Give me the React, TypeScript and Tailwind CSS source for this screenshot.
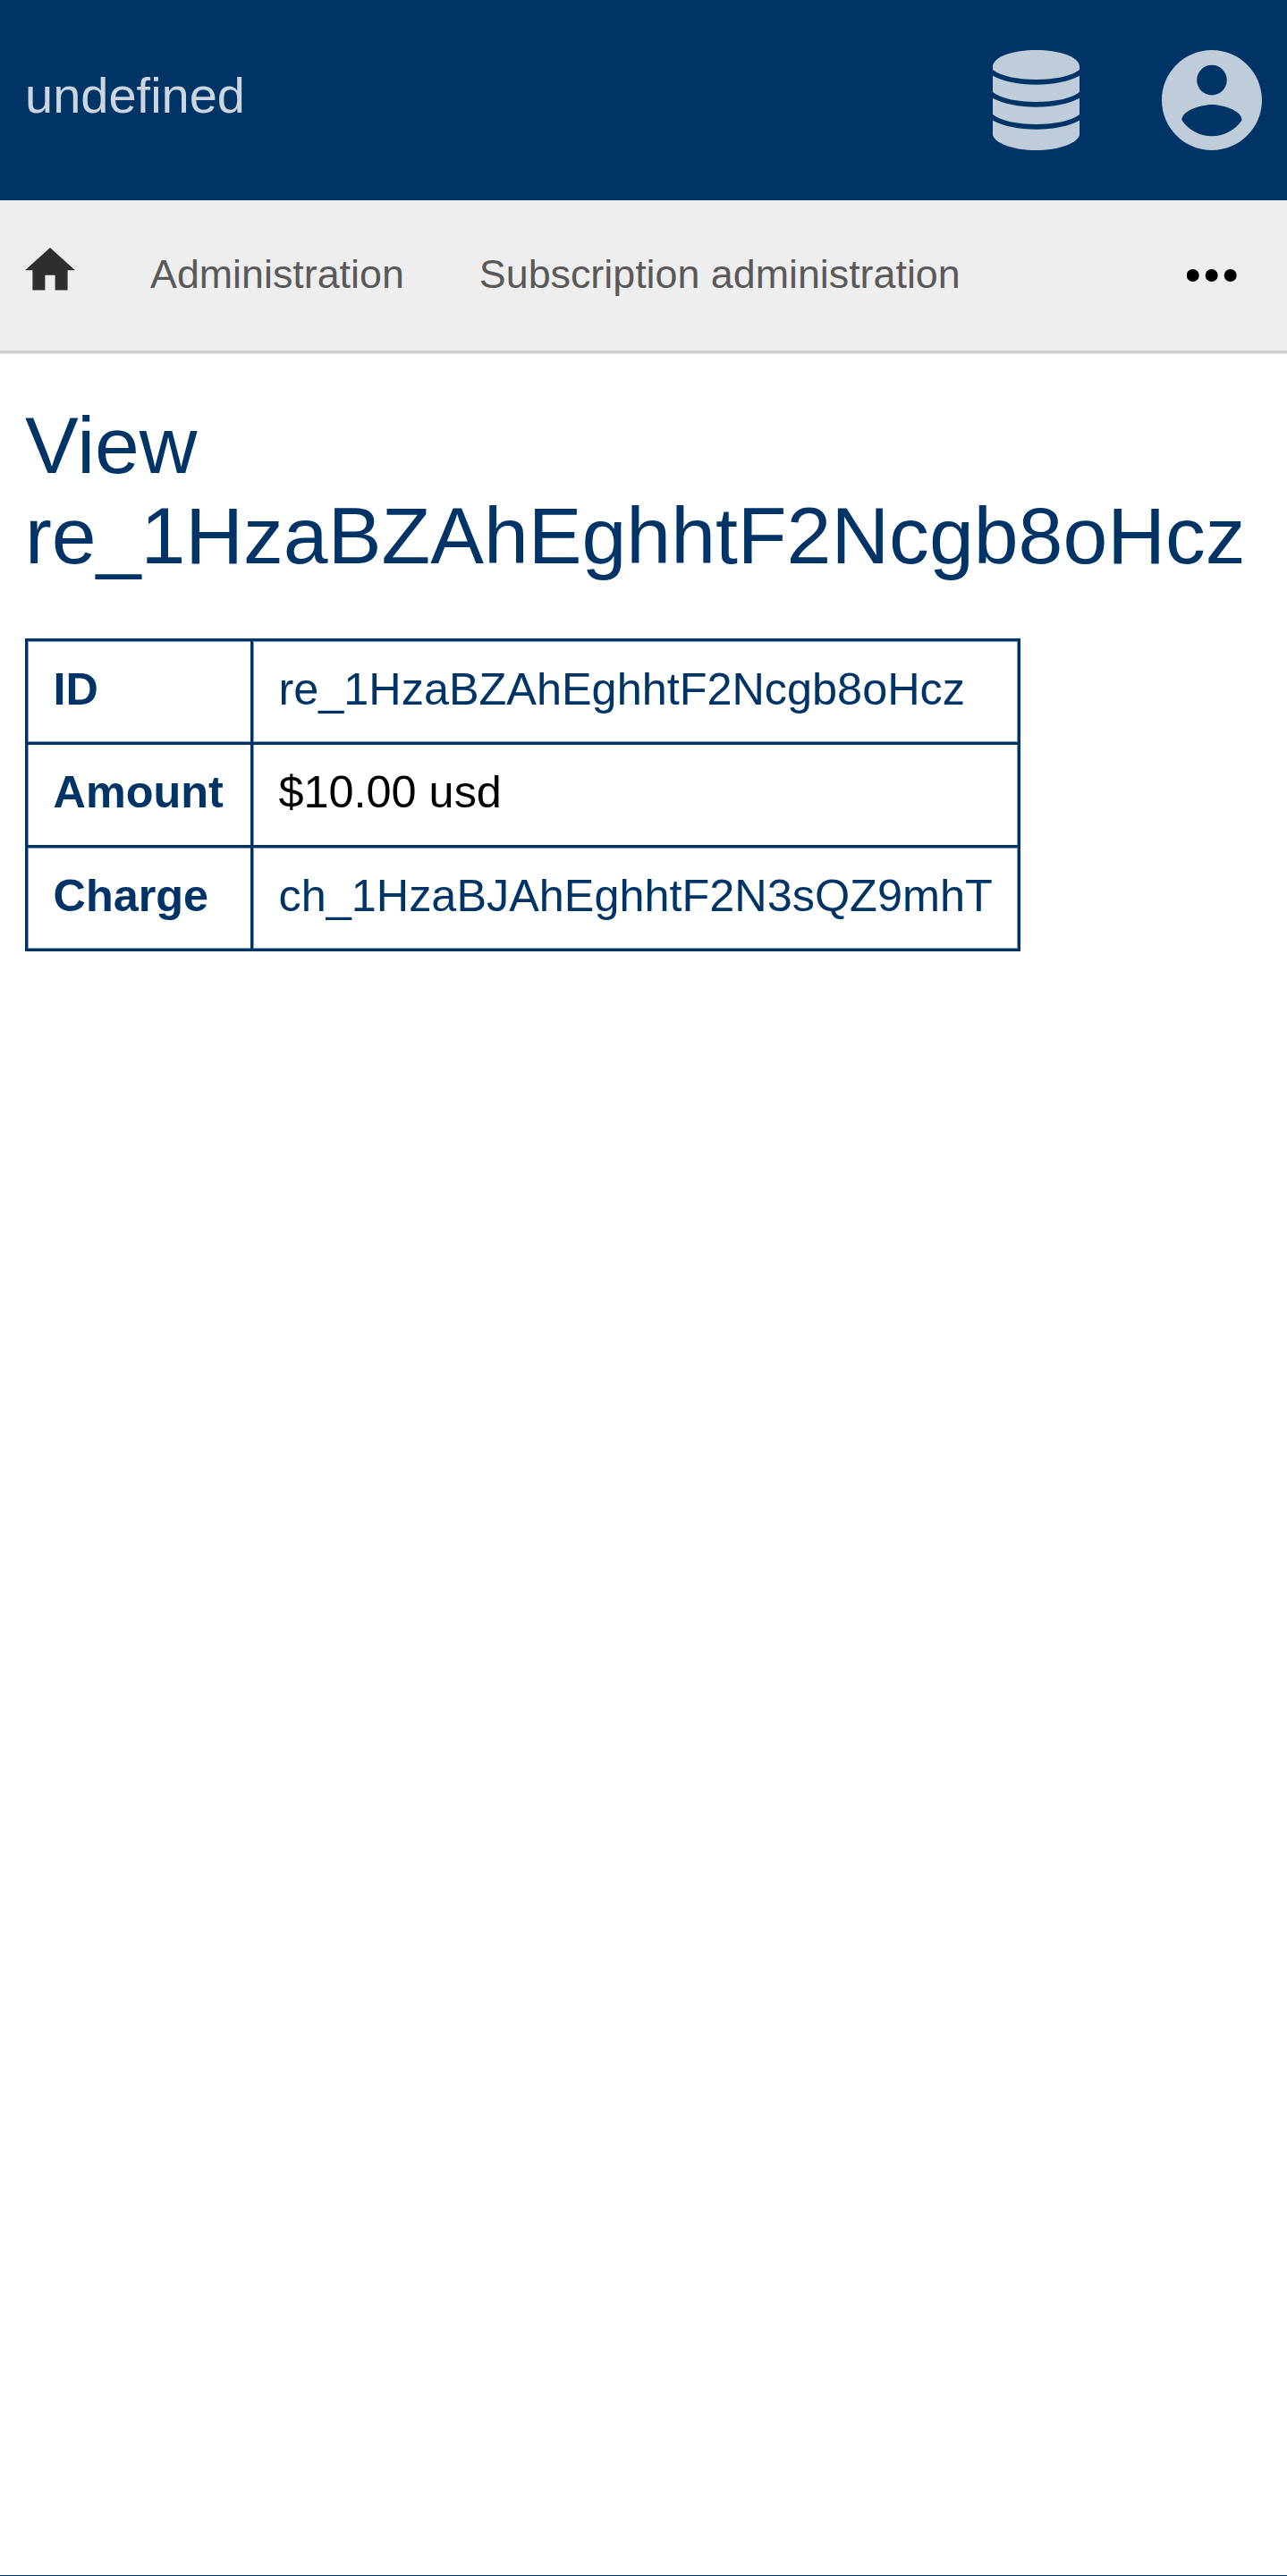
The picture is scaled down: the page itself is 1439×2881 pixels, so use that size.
const rows = [
  {
    label: 'ID',
    value: 're_1HzaBZAhEghhtF2Ncgb8oHcz',
    color: 'text-[#003366]',
    height: 'h-[116px]',
    offset: 'pt-[25px]',
    th: 'shadow-[inset_1px_1px_0_#7f99b2,inset_0_-1px_0_#7f99b2]',
    td: 'shadow-[inset_1px_1px_0_#7f99b2,inset_-1px_-1px_0_#7f99b2]',
  },
  {
    label: 'Amount',
    value: '$10.00 usd',
    color: 'text-black',
    height: 'h-[115px]',
    offset: 'pt-[24px]',
    th: 'shadow-[inset_1px_0_0_#7f99b2]',
    td: 'shadow-[inset_1px_0_0_#7f99b2,inset_-1px_0_0_#7f99b2]',
  },
  {
    label: 'Charge',
    value: 'ch_1HzaBJAhEghhtF2N3sQZ9mhT',
    color: 'text-[#003366]',
    height: 'h-[116px]',
    offset: 'pt-[25px]',
    th: 'shadow-[inset_1px_1px_0_#7f99b2,inset_0_-1px_0_#7f99b2]',
    td: 'shadow-[inset_1px_1px_0_#7f99b2,inset_-1px_-1px_0_#7f99b2]',
  },
];

function DatabaseIcon() {
  return (
    <svg className="h-28 w-[97px]" viewBox="0 0 97 112" fill="currentColor">
      <path d="M0 17.5C2 7 23 0 48.5 0S95 7 97 17.5V22C88 29 70 33 48.5 33S9 29 0 22Z" />
      <path d="M0 28.7C12 35 29 38.7 48.5 38.7S85 35 97 28.7V47C88 54 70 58 48.5 58S9 54 0 47Z" />
      <path d="M0 53.7C12 60 29 63.7 48.5 63.7S85 60 97 53.7V72C88 79 70 83 48.5 83S9 79 0 72Z" />
      <path d="M0 78.7C12 85 29 88.7 48.5 88.7S85 85 97 78.7V94.700C95 104 74 112 48.5 112S2 104 0 94.700Z" />
    </svg>
  );
}

function AccountIcon() {
  return (
    <svg className="size-28" viewBox="2 2 20 20" fill="currentColor">
      <path d="M12 2C6.48 2 2 6.48 2 12s4.48 10 10 10 10-4.48 10-10S17.52 2 12 2zm0 3c1.66 0 3 1.34 3 3s-1.34 3-3 3-3-1.34-3-3 1.34-3 3-3zm0 14.2c-2.5 0-4.71-1.28-6-3.22.03-1.99 4-3.08 6-3.08 1.99 0 5.97 1.09 6 3.08-1.29 1.94-3.5 3.22-6 3.22z" />
    </svg>
  );
}

export default function App() {
  return (
    <div className="flex h-[2881px] w-[1439px] flex-col bg-white font-['Liberation_Sans',Arial,sans-serif] text-black">
      <header className="flex h-56 shrink-0 items-start justify-between bg-[#003366] px-7 pt-14">
        <a className="mt-[19px] text-[56px] leading-[64px] text-[#ccd6e0]">undefined</a>
        <div className="flex gap-[92px] text-[#bfccd9]">
          <DatabaseIcon />
          <AccountIcon />
        </div>
      </header>

      <nav className="flex h-[172px] shrink-0 items-start border-b border-[#e5e5e5] bg-[#eeeeee] pl-7 shadow-[inset_0_-3px_0_#cccccc]">
        <svg className="mt-[53px] h-[47.6px] w-14 text-[#2e2e2e]" viewBox="2 3 20 17" fill="currentColor">
          <path d="M10 20v-6h4v6h5v-8h3L12 3 2 12h3v8z" />
        </svg>
        <div className="ml-[84px] mt-[56px] flex gap-[84px] text-[44.8px] leading-[52px] text-[#595959]">
          <a>Administration</a>
          <a>Subscription administration</a>
        </div>
        <svg className="ml-auto mr-14 mt-[77px] h-[14px] w-14" viewBox="0.3 0 56 14">
          <circle cx="7" cy="7" r="7" />
          <circle cx="28" cy="7" r="7" />
          <circle cx="49" cy="7" r="7" />
        </svg>
      </nav>

      <main className="flex-1 px-7 pt-[52px]">
        <h1 className="text-[89.6px] leading-[100.8px] text-[#003366]">
          View
          <br />
          re_1HzaBZAhEghhtF2Ncgb8oHcz
        </h1>
        <table className="mt-[64px] w-[1113px] table-fixed border-separate border-spacing-0 border-l-3 border-t-3 border-[#003366] text-[50.4px] leading-[57px]">
          <tbody>
            {rows.map((row) => (
              <tr key={row.label} className={row.height}>
                <th
                  className={`w-[252px] border-b-3 border-r-3 border-[#003366] py-0 pl-[28.5px] pr-0 text-left align-top font-bold text-[#003366] ${row.th}`}
                >
                  <div className={row.offset}>{row.label}</div>
                </th>
                <td className={`border-b-3 border-r-3 border-[#003366] py-0 pl-[28.5px] pr-0 align-top ${row.td}`}>
                  <div className={`${row.offset} ${row.color}`}>{row.value}</div>
                </td>
              </tr>
            ))}
          </tbody>
        </table>
      </main>
      <footer className="h-px shrink-0 bg-[#003366]" />
    </div>
  );
}
